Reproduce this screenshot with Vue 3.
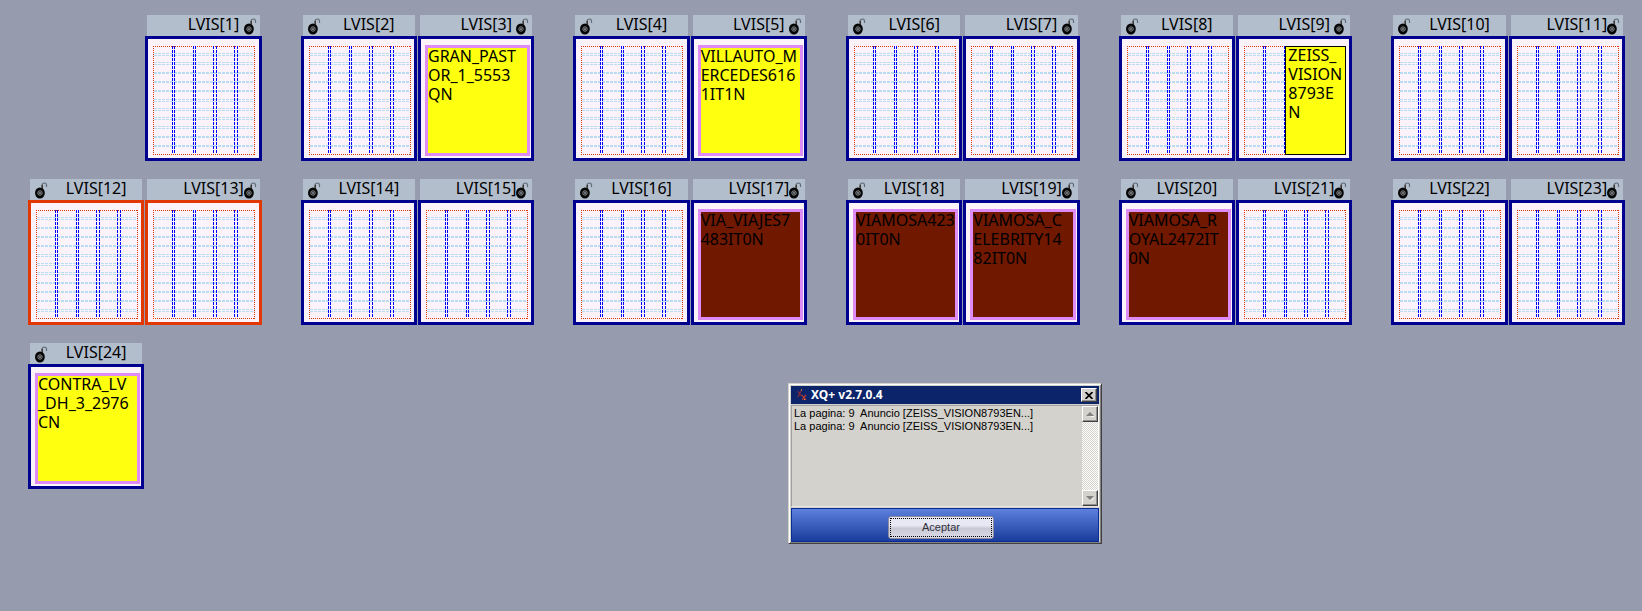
<script setup>
const ads = {
  3: { kind: 'framed', tone: 'yellow', lines: ['GRAN_PAST', 'OR_1_5553', 'QN'] },
  5: { kind: 'framed', tone: 'yellow', lines: ['VILLAUTO_M', 'ERCEDES616', '1IT1N'] },
  9: { kind: 'half', tone: 'yellow', lines: ['ZEISS_', 'VISION', '8793E', 'N'] },
  17: { kind: 'framed', tone: 'brown', lines: ['VIA_VIAJES7', '483IT0N'] },
  18: { kind: 'framed', tone: 'brown', lines: ['VIAMOSA423', '0IT0N'] },
  19: { kind: 'framed', tone: 'brown', lines: ['VIAMOSA_C', 'ELEBRITY14', '82IT0N'] },
  20: { kind: 'framed', tone: 'brown', lines: ['VIAMOSA_R', 'OYAL2472IT', '0N'] },
  24: { kind: 'framed', tone: 'yellow', lines: ['CONTRA_LV', '_DH_3_2976', 'CN'] }
}

const columns = [19, 21, 40, 42, 60, 63, 81, 84]
const rowsUpper = [7, 9, 16, 18, 26, 27, 35, 36, 44, 45, 53, 55, 62, 64, 71, 73, 80, 82, 90, 91, 99, 100]
const rowsLower = [7, 9, 17, 18, 26, 27, 35, 36, 44, 46, 53, 55, 62, 64, 72, 73, 81, 82, 90, 91, 99, 101]

const page = (n) => ({
  n,
  right: n % 2 === 1,
  marked: n === 12 || n === 13,
  ad: ads[n],
  rules: n < 12 ? rowsUpper : rowsLower
})

const spreads = Array.from({ length: 13 }, (_, i) =>
  [i * 2, i * 2 + 1].filter((n) => n > 0 && n < 25).map(page)
)

const messages = [
  'La pagina: 9  Anuncio [ZEISS_VISION8793EN...]',
  'La pagina: 9  Anuncio [ZEISS_VISION8793EN...]'
]
</script>

<template>
  <main class="board">
    <section v-for="(spread, i) in spreads" :key="i" class="spread">
      <article
        v-for="p in spread"
        :key="p.n"
        class="page"
        :class="{ right: p.right, marked: p.marked }"
      >
        <header class="head">
          <span>LVIS[{{ p.n }}]</span>
          <svg class="lock" width="13" height="17" viewBox="0 0 13 17" aria-hidden="true">
            <path d="M7 6V3Q7.500 1 9.500 1Q12 1 11.500 5" fill="none" stroke="#606c78" stroke-width="1.200" />
            <path d="M7.300 3V7" stroke="#3d3427" stroke-width="1.300" />
            <ellipse cx="4.900" cy="11" rx="4.900" ry="5.500" fill="#050505" />
            <circle cx="5" cy="11" r="2.200" fill="none" stroke="#8c9296" stroke-width="1" />
            <rect x="4.500" y="10" width="1" height="2" fill="#d5d8dc" />
          </svg>
        </header>
        <div class="sheet">
          <svg v-if="!p.ad || p.ad.kind === 'half'" class="grid" aria-hidden="true">
            <line v-for="y in p.rules" :key="'h' + y" x1="1" :y1="y + 0.5" x2="100%" :y2="y + 0.5" class="rule" />
            <line x1="0" y1="0.5" x2="100%" y2="0.5" class="edge" />
            <line x1="0" y1="108.5" x2="100%" y2="108.5" class="edge" />
            <line x1="0.5" y1="0" x2="0.5" y2="109" class="edge" />
            <line x1="99.5%" y1="0" x2="99.5%" y2="109" class="edge" />
            <line v-for="x in columns" :key="'v' + x" :x1="x + 0.5" y1="0" :x2="x + 0.5" y2="108" class="col" />
          </svg>
          <div v-if="p.ad" class="ad" :class="[p.ad.kind, p.ad.tone]">
            <p><span v-for="line in p.ad.lines" :key="line">{{ line }}</span></p>
          </div>
        </div>
      </article>
    </section>
  </main>

  <div class="dialog" role="dialog" aria-labelledby="dialog-title">
    <div class="title">
      <svg class="logo" width="10" height="12" viewBox="0 0 10 12" aria-hidden="true">
        <path d="M1 2L2.500 5L1 8M4 2L2.500 5L5 7" fill="none" stroke="#8c2838" stroke-width="1.200" />
        <path d="M5 6L6.500 8L5.500 11M9 6L7 8L9 11" fill="none" stroke="#b83c34" stroke-width="1.200" />
        <rect x="4" y="0" width="1" height="2" fill="#b87838" />
        <rect x="7" y="10" width="1" height="1" fill="#e88c40" />
      </svg>
      <h1 id="dialog-title">XQ+ v2.7.0.4</h1>
      <button class="close raised" type="button" aria-label="Cerrar">
        <svg width="8" height="7" viewBox="0 0 8 7"><path d="M0.500 0L7.500 7M7.500 0L0.500 7" stroke="#000" stroke-width="1.700" /></svg>
      </button>
    </div>
    <div class="log">
      <ul>
        <li v-for="(m, i) in messages" :key="i">{{ m }}</li>
      </ul>
      <div class="scroll">
        <button class="raised" type="button" aria-label="Subir">
          <svg width="8" height="5" viewBox="0 0 8 5"><path d="M1 5H9L8 4Z" fill="#fff" /><path d="M0 4L4 0L8 4Z" fill="#808080" /></svg>
        </button>
        <button class="raised" type="button" aria-label="Bajar">
          <svg width="8" height="5" viewBox="0 0 8 5"><path d="M8 1L4 5L5 5L8 2Z" fill="#fff" /><path d="M0 0H8L4 4Z" fill="#808080" /></svg>
        </button>
      </div>
    </div>
    <div class="foot">
      <button class="accept" type="button"><span>Aceptar</span></button>
    </div>
  </div>
</template>

<style>
body {
  margin: 0;
  background: #969bad;
}
</style>

<style scoped>
.board {
  display: grid;
  grid-template-columns: repeat(6, 1fr);
  column-gap: 39px;
  row-gap: 18px;
  padding: 15px 17px 18px 28px;
  font: 16px/19px "Noto Sans", "DejaVu Sans", sans-serif;
  color: #000;
}
.spread {
  display: grid;
  grid-template-columns: 1fr 1fr;
  column-gap: 1px;
}
.page {
  grid-column: 1;
}
.page.right {
  grid-column: 2;
}
.head {
  position: relative;
  height: 21px;
  box-sizing: border-box;
  margin: 0 2px;
  padding-left: 20px;
  text-align: center;
  background: #b3becd;
}
.lock {
  position: absolute;
  left: 5px;
  top: 3px;
}
.right .lock {
  left: auto;
  right: 3px;
}
.sheet {
  position: relative;
  display: grid;
  box-sizing: border-box;
  height: 125px;
  border: 3px solid #000090;
  background: #fcf3fa;
}
.marked .sheet {
  border-color: #e03800;
}
.grid {
  min-width: 0;
  width: calc(100% - 8px);
  height: 109px;
  margin: 7px 3px 0 5px;
  shape-rendering: crispEdges;
}
.rule {
  stroke: #b8dcf2;
  stroke-dasharray: 3 1;
}
.edge {
  stroke: #e03800;
  stroke-dasharray: 1 1;
}
.col {
  stroke: #0000f8;
  stroke-dasharray: 3 1;
}
.ad {
  box-sizing: border-box;
}
.ad p {
  margin: -1px 0 0;
}
.ad span {
  display: block;
  white-space: pre;
}
.framed {
  margin: 6px 1px 2px 4px;
  border: 3px solid #dc8cf4;
}
.half {
  position: absolute;
  top: 7px;
  right: 3px;
  bottom: 3px;
  width: 61px;
  border: 1px solid #000;
  padding-left: 2px;
}
.yellow {
  background: #ffff10;
}
.brown {
  background: #701800;
}
.dialog {
  position: absolute;
  left: 788px;
  top: 383px;
  width: 314px;
  box-sizing: border-box;
  padding: 1px;
  background: #d4d2cc;
  border: 1px solid #d4d2cc;
  border-right-color: #404040;
  border-bottom-color: #404040;
  box-shadow: inset 1px 1px #fff, inset -1px -1px #808080;
  font: 11px/13px "Liberation Sans", Arial, sans-serif;
}
.title {
  display: flex;
  align-items: center;
  height: 18px;
  margin: 1px 1px 0;
  padding: 0 2px 0 6px;
  background: #0b246a;
}
.title h1 {
  flex: 1;
  margin: 0 0 0 4px;
  font: bold 12px/16px "Noto Sans", "DejaVu Sans", sans-serif;
  color: #fff;
}
.raised {
  display: flex;
  align-items: center;
  justify-content: center;
  box-sizing: border-box;
  width: 16px;
  height: 16px;
  padding: 0;
  background: #d4d2cc;
  border: 1px solid;
  border-color: #fff #404040 #404040 #fff;
  box-shadow: inset -1px -1px #909090;
}
.raised.close {
  height: 14px;
}
.log {
  display: flex;
  height: 102px;
  box-sizing: border-box;
  margin: 1px 1px 0;
  border: 1px solid #a0a0a0;
  border-right-color: #fff;
  border-bottom-color: #e8e6e0;
}
.log ul {
  flex: 1;
  margin: 0;
  padding: 1px 0 0 2px;
  list-style: none;
}
.log li {
  white-space: pre;
}
.scroll {
  display: flex;
  flex-direction: column;
  justify-content: space-between;
  background: repeating-conic-gradient(#fff 0 25%, #d4d2cc 0 50%) 0 0 / 2px 2px;
}
.foot {
  display: flex;
  align-items: center;
  justify-content: center;
  height: 34px;
  box-sizing: border-box;
  margin: 1px 1px 0;
  padding: 4px 8px 0 0;
  border: 1px solid #0a2c98;
  background: linear-gradient(#5c80dc, #1a3c9c);
}
.accept {
  width: 106px;
  height: 23px;
  padding: 1px;
  border: 1px solid #8c8ca0;
  border-radius: 3px;
  background: linear-gradient(#e8e8f4 0 40%, #c8c8d6 55%, #dcdce8);
  font: inherit;
  color: #303038;
}
.accept span {
  display: block;
  border: 1px dotted #000;
  line-height: 17px;
}
</style>
